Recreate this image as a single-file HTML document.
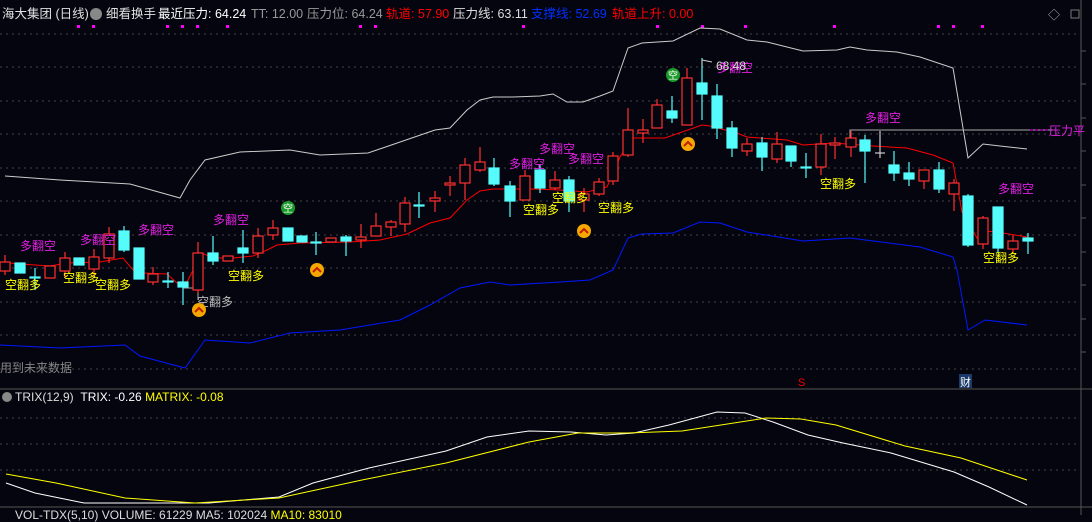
<!DOCTYPE html>
<html><head><meta charset="utf-8"><style>
body{margin:0;background:#05050f;width:1092px;height:515px;overflow:hidden;position:relative;font-family:"Liberation Sans","Noto Sans CJK SC",sans-serif;font-size:12px}
.t{position:absolute;white-space:nowrap;line-height:14px}
.h{font-size:12.5px}
</style></head><body>
<div class="t h" style="left:2px;top:7px;color:#e0e0e0">海大集团 (日线)</div>
<div class="t" style="left:90px;top:8px;width:12px;height:12px;border-radius:6px;background:#888"></div>
<div class="t h" style="left:106px;top:7px;color:#e0e0e0">细看换手</div>
<div class="t h" style="left:158px;top:7px;color:#fff">最近压力: 64.24</div>
<div class="t h" style="left:251px;top:7px;color:#999">TT: 12.00</div>
<div class="t h" style="left:307px;top:7px;color:#999">压力位: 64.24</div>
<div class="t h" style="left:386px;top:7px;color:#f00">轨道: 57.90</div>
<div class="t h" style="left:453px;top:7px;color:#ddd">压力线: 63.11</div>
<div class="t h" style="left:531px;top:7px;color:#0030ff">支撑线: 52.69</div>
<div class="t h" style="left:612px;top:7px;color:#f00">轨道上升: 0.00</div>
<div class="t" style="left:0;top:361px;color:#888">用到未来数据</div>
<div class="t" style="left:15px;top:390px;color:#ddd">TRIX(12,9) &nbsp;<span style="color:#fff">TRIX: -0.26</span> <span style="color:#ff0">MATRIX: -0.08</span></div>
<div class="t" style="left:2px;top:392px;width:10px;height:10px;border-radius:5px;background:#888"></div>
<div class="t" style="left:15px;top:508px;color:#ddd">VOL-TDX(5,10) VOLUME: 61229 MA5: 102024 <span style="color:#ff0">MA10: 83010</span></div>
<svg width="1092" height="515" style="position:absolute;left:0;top:0">
<g stroke="#444" stroke-dasharray="2,4" stroke-width="1">
<line x1="0" x2="1080" y1="34" y2="34"/><line x1="0" x2="1080" y1="67" y2="67"/><line x1="0" x2="1080" y1="101" y2="101"/><line x1="0" x2="1080" y1="134" y2="134"/><line x1="0" x2="1080" y1="168" y2="168"/><line x1="0" x2="1080" y1="201" y2="201"/><line x1="0" x2="1080" y1="235" y2="235"/><line x1="0" x2="1080" y1="268" y2="268"/><line x1="0" x2="1080" y1="302" y2="302"/><line x1="0" x2="1080" y1="335" y2="335"/><line x1="0" x2="1080" y1="369" y2="369"/>
<line x1="0" x2="1080" y1="418" y2="418"/><line x1="0" x2="1080" y1="444" y2="444"/><line x1="0" x2="1080" y1="470" y2="470"/>
</g>
<line x1="0" x2="1092" y1="389" y2="389" stroke="#555"/>
<line x1="0" x2="1092" y1="507" y2="507" stroke="#555"/>
<line x1="1081" x2="1081" y1="0" y2="515" stroke="#555"/>
<g stroke="#555"><line x1="1081" x2="1086" y1="51" y2="51"/><line x1="1081" x2="1086" y1="84" y2="84"/><line x1="1081" x2="1086" y1="118" y2="118"/><line x1="1081" x2="1086" y1="151" y2="151"/><line x1="1081" x2="1086" y1="185" y2="185"/><line x1="1081" x2="1086" y1="218" y2="218"/><line x1="1081" x2="1086" y1="252" y2="252"/><line x1="1081" x2="1086" y1="285" y2="285"/><line x1="1081" x2="1086" y1="319" y2="319"/><line x1="1081" x2="1086" y1="352" y2="352"/></g>
<text x="1048" y="19" fill="#aaa" font-size="12">◇</text>
<rect x="1071" y="10" width="8" height="8" fill="none" stroke="#777"/>
<g fill="#f0f"><rect x="77" y="25" width="3" height="3"/><rect x="92" y="25" width="3" height="3"/><rect x="166" y="25" width="3" height="3"/><rect x="181" y="25" width="3" height="3"/><rect x="196" y="25" width="3" height="3"/><rect x="226" y="25" width="3" height="3"/><rect x="359" y="25" width="3" height="3"/><rect x="374" y="25" width="3" height="3"/><rect x="522" y="25" width="3" height="3"/><rect x="656" y="25" width="3" height="3"/><rect x="701" y="25" width="3" height="3"/><rect x="744" y="25" width="3" height="3"/><rect x="833" y="25" width="3" height="3"/><rect x="937" y="25" width="3" height="3"/><rect x="952" y="25" width="3" height="3"/><rect x="981" y="25" width="3" height="3"/></g>
<polyline fill="none" stroke="#ccc" points="5,176 60,180 130,184 180,198 190,180 205,160 240,152 290,150 320,155 368,153 435,130 450,128 467,110 480,100 493,97 513,97 540,96 553,94 567,102 583,102 600,96 613,91 628,48 642,43 673,41 700,28 720,29 747,40 767,42 803,51 837,50 850,47 867,50 897,52 920,57 953,68 968,158 983,144 1000,146 1027,149"/>
<polyline fill="none" stroke="#f00" points="0,262 20,264 50,266 67,263 100,262 123,258 133,270 143,273 167,274 177,283 187,282 202,253 213,258 233,258 253,256 267,250 277,245 300,243 350,242 380,240 407,234 430,223 450,218 467,200 480,191 493,189 533,189 560,190 587,192 607,187 620,157 632,138 665,138 702,125 710,126 737,133 747,137 787,140 803,145 833,143 873,146 907,148 933,155 953,163 962,212 977,238 987,231 1003,233 1027,237"/>
<polyline fill="none" stroke="#0018ff" points="0,345 60,348 125,345 140,356 185,368 205,340 250,343 290,333 340,330 400,320 430,305 460,288 490,282 510,285 560,282 590,280 613,270 628,238 642,234 673,233 700,222 720,223 747,232 803,241 850,238 920,247 953,257 957,270 968,330 985,320 1027,325"/>
<polyline fill="none" stroke="#aaa" points="850,138 850,130 1055,130"/>
<line x1="1030" x2="1048" y1="130" y2="130" stroke="#f0f" stroke-dasharray="3,2"/>
<polyline fill="none" stroke="#aaa" points="183,288 198,288 198,300"/>
<g id="c" stroke-width="1.2">
<g stroke="#ff3030" fill="#05050f">
<line x1="5" x2="5" y1="255" y2="275"/><rect x="0" y="262" width="10" height="9"/>
<line x1="50" x2="50" y1="266" y2="278"/><rect x="45" y="266" width="10" height="12"/>
<line x1="65" x2="65" y1="252" y2="278"/><rect x="60" y="258" width="10" height="13"/>
<line x1="94" x2="94" y1="249" y2="278"/><rect x="89" y="257" width="10" height="12"/>
<line x1="109" x2="109" y1="227" y2="263"/><rect x="104" y="234" width="10" height="24"/>
<line x1="153" x2="153" y1="267" y2="285"/><rect x="148" y="274" width="10" height="8"/>
<line x1="198" x2="198" y1="242" y2="293"/><rect x="193" y="253" width="10" height="37"/>
<rect x="223" y="256" width="10" height="5"/>
<line x1="258" x2="258" y1="228" y2="258"/><rect x="253" y="236" width="10" height="17"/>
<line x1="273" x2="273" y1="220" y2="240"/><rect x="268" y="228" width="10" height="7"/>
<rect x="326" y="238" width="10" height="4"/>
<line x1="361" x2="361" y1="224" y2="248"/><rect x="356" y="237" width="10" height="3"/>
<line x1="376" x2="376" y1="213" y2="236"/><rect x="371" y="226" width="10" height="10"/>
<line x1="391" x2="391" y1="220" y2="236"/><rect x="386" y="222" width="10" height="5"/>
<line x1="405" x2="405" y1="197" y2="232"/><rect x="400" y="203" width="10" height="21"/>
<line x1="435" x2="435" y1="191" y2="212"/><rect x="430" y="198" width="10" height="3"/>
<line x1="450" x2="450" y1="176" y2="196"/><rect x="445" y="183" width="10" height="2"/>
<line x1="465" x2="465" y1="158" y2="200"/><rect x="460" y="165" width="10" height="18"/>
<line x1="480" x2="480" y1="147" y2="172"/><rect x="475" y="162" width="10" height="8"/>
<line x1="525" x2="525" y1="170" y2="200"/><rect x="520" y="176" width="10" height="24"/>
<line x1="555" x2="555" y1="171" y2="190"/><rect x="550" y="180" width="10" height="8"/>
<line x1="584" x2="584" y1="188" y2="212"/><rect x="579" y="194" width="10" height="6"/>
<line x1="599" x2="599" y1="178" y2="196"/><rect x="594" y="182" width="10" height="12"/>
<line x1="613" x2="613" y1="152" y2="185"/><rect x="608" y="156" width="10" height="25"/>
<line x1="628" x2="628" y1="108" y2="157"/><rect x="623" y="130" width="10" height="25"/>
<line x1="643" x2="643" y1="119" y2="143"/><rect x="638" y="130" width="10" height="3"/>
<line x1="657" x2="657" y1="99" y2="128"/><rect x="652" y="105" width="10" height="23"/>
<line x1="687" x2="687" y1="68" y2="125"/><rect x="682" y="78" width="10" height="47"/>
<line x1="747" x2="747" y1="138" y2="156"/><rect x="742" y="144" width="10" height="7"/>
<line x1="777" x2="777" y1="132" y2="163"/><rect x="772" y="144" width="10" height="15"/>
<line x1="821" x2="821" y1="134" y2="175"/><rect x="816" y="144" width="10" height="23"/>
<line x1="835" x2="835" y1="137" y2="159"/><rect x="830" y="143" width="10" height="2"/>
<line x1="851" x2="851" y1="131" y2="157"/><rect x="846" y="138" width="10" height="9"/>
<line x1="924" x2="924" y1="170" y2="189"/><rect x="919" y="170" width="10" height="11"/>
<line x1="954" x2="954" y1="179" y2="211"/><rect x="949" y="183" width="10" height="11"/>
<line x1="983" x2="983" y1="216" y2="249"/><rect x="978" y="218" width="10" height="26"/>
<line x1="1013" x2="1013" y1="235" y2="253"/><rect x="1008" y="241" width="10" height="8"/>
</g>
<g stroke="#54fcfc" fill="#54fcfc">
<rect x="15" y="263" width="10" height="10"/>
<line x1="35" x2="35" y1="268" y2="290"/><rect x="30" y="277" width="10" height="1"/>
<rect x="74" y="258" width="10" height="7"/>
<line x1="124" x2="124" y1="226" y2="252"/><rect x="119" y="231" width="10" height="19"/>
<rect x="134" y="248" width="10" height="31"/>
<line x1="168" x2="168" y1="272" y2="288"/><rect x="163" y="281" width="10" height="1"/>
<line x1="183" x2="183" y1="272" y2="305"/><rect x="178" y="282" width="10" height="5"/>
<line x1="213" x2="213" y1="236" y2="265"/><rect x="208" y="253" width="10" height="8"/>
<line x1="243" x2="243" y1="230" y2="263"/><rect x="238" y="248" width="10" height="5"/>
<rect x="283" y="228" width="10" height="13"/>
<rect x="297" y="236" width="10" height="6"/>
<line x1="316" x2="316" y1="232" y2="255"/><rect x="311" y="242" width="10" height="1"/>
<line x1="346" x2="346" y1="235" y2="256"/><rect x="341" y="237" width="10" height="4"/>
<line x1="419" x2="419" y1="192" y2="218"/><rect x="414" y="205" width="10" height="1"/>
<line x1="494" x2="494" y1="158" y2="186"/><rect x="489" y="168" width="10" height="16"/>
<line x1="510" x2="510" y1="181" y2="217"/><rect x="505" y="186" width="10" height="15"/>
<line x1="540" x2="540" y1="165" y2="193"/><rect x="535" y="170" width="10" height="18"/>
<line x1="569" x2="569" y1="176" y2="212"/><rect x="564" y="180" width="10" height="21"/>
<line x1="672" x2="672" y1="96" y2="123"/><rect x="667" y="111" width="10" height="7"/>
<line x1="702" x2="702" y1="58" y2="120"/><rect x="697" y="83" width="10" height="11"/>
<line x1="717" x2="717" y1="84" y2="139"/><rect x="712" y="96" width="10" height="32"/>
<line x1="732" x2="732" y1="121" y2="157"/><rect x="727" y="128" width="10" height="20"/>
<line x1="762" x2="762" y1="137" y2="171"/><rect x="757" y="143" width="10" height="14"/>
<line x1="791" x2="791" y1="146" y2="167"/><rect x="786" y="146" width="10" height="15"/>
<line x1="806" x2="806" y1="153" y2="178"/><rect x="801" y="167" width="10" height="1"/>
<line x1="865" x2="865" y1="135" y2="183"/><rect x="860" y="140" width="10" height="11"/>
<line x1="894" x2="894" y1="151" y2="181"/><rect x="889" y="165" width="10" height="8"/>
<line x1="909" x2="909" y1="162" y2="186"/><rect x="904" y="173" width="10" height="6"/>
<line x1="939" x2="939" y1="162" y2="193"/><rect x="934" y="170" width="10" height="19"/>
<line x1="968" x2="968" y1="194" y2="247"/><rect x="963" y="196" width="10" height="49"/>
<line x1="998" x2="998" y1="207" y2="253"/><rect x="993" y="207" width="10" height="41"/>
<line x1="1028" x2="1028" y1="233" y2="254"/><rect x="1023" y="238" width="10" height="3"/>
</g>
<g stroke="#ccc"><line x1="880" x2="880" y1="131" y2="158"/><line x1="875" x2="885" y1="153" y2="153"/></g>
</g>
<g font-size="12" fill="#e020e0">
<text x="20" y="250">多翻空</text><text x="80" y="244">多翻空</text><text x="138" y="234">多翻空</text><text x="213" y="224">多翻空</text><text x="509" y="168">多翻空</text><text x="539" y="153">多翻空</text><text x="568" y="163">多翻空</text><text x="717" y="72">多翻空</text><text x="865" y="122">多翻空</text><text x="998" y="193">多翻空</text><text x="1049" y="135">压力平</text>
</g>
<g font-size="12" fill="#ffff00">
<text x="5" y="289">空翻多</text><text x="63" y="282">空翻多</text><text x="95" y="289">空翻多</text><text x="228" y="280">空翻多</text><text x="552" y="202">空翻多</text><text x="523" y="214">空翻多</text><text x="598" y="212">空翻多</text><text x="820" y="188">空翻多</text><text x="983" y="262">空翻多</text>
</g>
<text x="197" y="306" font-size="12" fill="#bbb">空翻多</text>
<text x="716" y="70" font-size="12" fill="#ddd">68.48</text>
<polyline points="702,66 702,60 712,62" fill="none" stroke="#ccc"/>
<g>
<circle cx="199" cy="310" r="7" fill="#f5a800"/><polyline points="195,312 199,308 203,312" fill="none" stroke="#c02000" stroke-width="2"/>
<circle cx="317" cy="270" r="7" fill="#f5a800"/><polyline points="313,272 317,268 321,272" fill="none" stroke="#c02000" stroke-width="2"/>
<circle cx="584" cy="231" r="7" fill="#f5a800"/><polyline points="580,233 584,229 588,233" fill="none" stroke="#c02000" stroke-width="2"/>
<circle cx="688" cy="144" r="7" fill="#f5a800"/><polyline points="684,146 688,142 692,146" fill="none" stroke="#c02000" stroke-width="2"/>
<circle cx="288" cy="208" r="7" fill="#1a9a2a"/><text x="283" y="212" font-size="10" fill="#fff">空</text>
<circle cx="673" cy="75" r="7" fill="#1a9a2a"/><text x="668" y="79" font-size="10" fill="#fff">空</text>
</g>
<text x="798" y="386" font-size="11" fill="#f00">S</text>
<rect x="959" y="374" width="13" height="14" fill="#1a3a6a"/><text x="960" y="386" font-size="11" fill="#fff">财</text>
<polyline fill="none" stroke="#fff" points="6,483 35,493 84,503 139,503 209,503 279,497 313,483 369,468 446,451 487,437 529,431 571,432 606,435 634,433 669,425 717,412 745,413 773,422 808,435 843,443 891,453 954,472 989,487 1027,505"/>
<polyline fill="none" stroke="#ffff00" points="6,474 56,483 125,498 195,503 279,498 362,480 446,463 529,442 578,433 627,433 682,431 766,418 801,419 836,425 905,446 961,458 1027,480"/>
</svg>
</body></html>
